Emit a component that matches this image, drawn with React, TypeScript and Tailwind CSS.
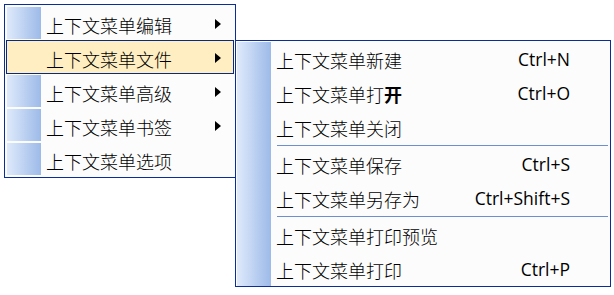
import type { ReactNode } from "react";

const cjk = "font-['Noto_Sans_CJK_SC','Noto_Sans',sans-serif] font-light";
const latin = "font-['Open_Sans','Noto_Sans',sans-serif]";

type MainItem = { label: string; sub?: boolean; active?: boolean };

const mainItems: MainItem[] = [
  { label: "上下文菜单编辑", sub: true },
  { label: "上下文菜单文件", sub: true, active: true },
  { label: "上下文菜单高级", sub: true },
  { label: "上下文菜单书签", sub: true },
  { label: "上下文菜单选项" },
];

type SubItem =
  | { sep: true }
  | { sep?: false; label: ReactNode; shortcut?: string };

const subItems: SubItem[] = [
  { label: "上下文菜单新建", shortcut: "Ctrl+N" },
  {
    label: (
      <>
        上下文菜单打<span className="font-bold">开</span>
      </>
    ),
    shortcut: "Ctrl+O",
  },
  { label: "上下文菜单关闭" },
  { sep: true },
  { label: "上下文菜单保存", shortcut: "Ctrl+S" },
  { label: "上下文菜单另存为", shortcut: "Ctrl+Shift+S" },
  { sep: true },
  { label: "上下文菜单打印预览" },
  { label: "上下文菜单打印", shortcut: "Ctrl+P" },
];

function Arrow() {
  return (
    <svg width="6" height="10" viewBox="0 0 6 10" className="shrink-0">
      <path d="M0 0 L6 5 L0 10 Z" fill="#000" />
    </svg>
  );
}

function MainMenu() {
  return (
    <div className="w-[232px] border border-[#0b2d98] bg-[#fcfcfc] p-px">
      {mainItems.map((it) => (
        <div
          key={it.label}
          className={`flex h-[34px] items-center ${
            it.active
              ? "border border-[#0a2a7e] bg-[#ffeec2]"
              : "border border-transparent"
          }`}
        >
          <div
            className={`h-full w-[34px] shrink-0 ${
              it.active ? "" : "bg-gradient-to-r from-[#dfeafb] to-[#9dbae8]"
            }`}
          />
          <span className={`ml-[5px] flex-1 pt-[3px] text-[18px] leading-none text-black ${cjk}`}>
            {it.label}
          </span>
          {it.sub && (
            <span className="mr-[12px] pt-px">
              <Arrow />
            </span>
          )}
        </div>
      ))}
    </div>
  );
}

function SubMenu() {
  return (
    <div className="absolute left-[235px] top-[40px] w-[376px] border border-[#0b2d98] bg-[#fcfcfc] px-px pt-px">
      {subItems.map((it, i) =>
        it.sep ? (
          <div key={i} className="flex h-[3px]">
            <div className="h-full w-[34px] shrink-0 bg-gradient-to-r from-[#dfeafb] to-[#9dbae8]" />
            <div className="ml-[6px] mr-px mt-px h-px flex-1 bg-[#6d8fd0]" />
          </div>
        ) : (
          <div key={i} className="flex h-[34px] items-center">
            <div className="h-full w-[34px] shrink-0 bg-gradient-to-r from-[#dfeafb] to-[#9dbae8]" />
            <span className={`ml-[5px] flex-1 pt-[2px] text-[18px] leading-none text-black ${cjk}`}>
              {it.label}
            </span>
            {it.shortcut && (
              <span className={`mr-[39px] pt-[2px] text-[17.5px] leading-none text-black ${latin}`}>
                {it.shortcut}
              </span>
            )}
          </div>
        )
      )}
    </div>
  );
}

export default function App() {
  return (
    <div className="relative h-[295px] w-[614px] overflow-hidden bg-white p-[4px]">
      <MainMenu />
      <SubMenu />
    </div>
  );
}
